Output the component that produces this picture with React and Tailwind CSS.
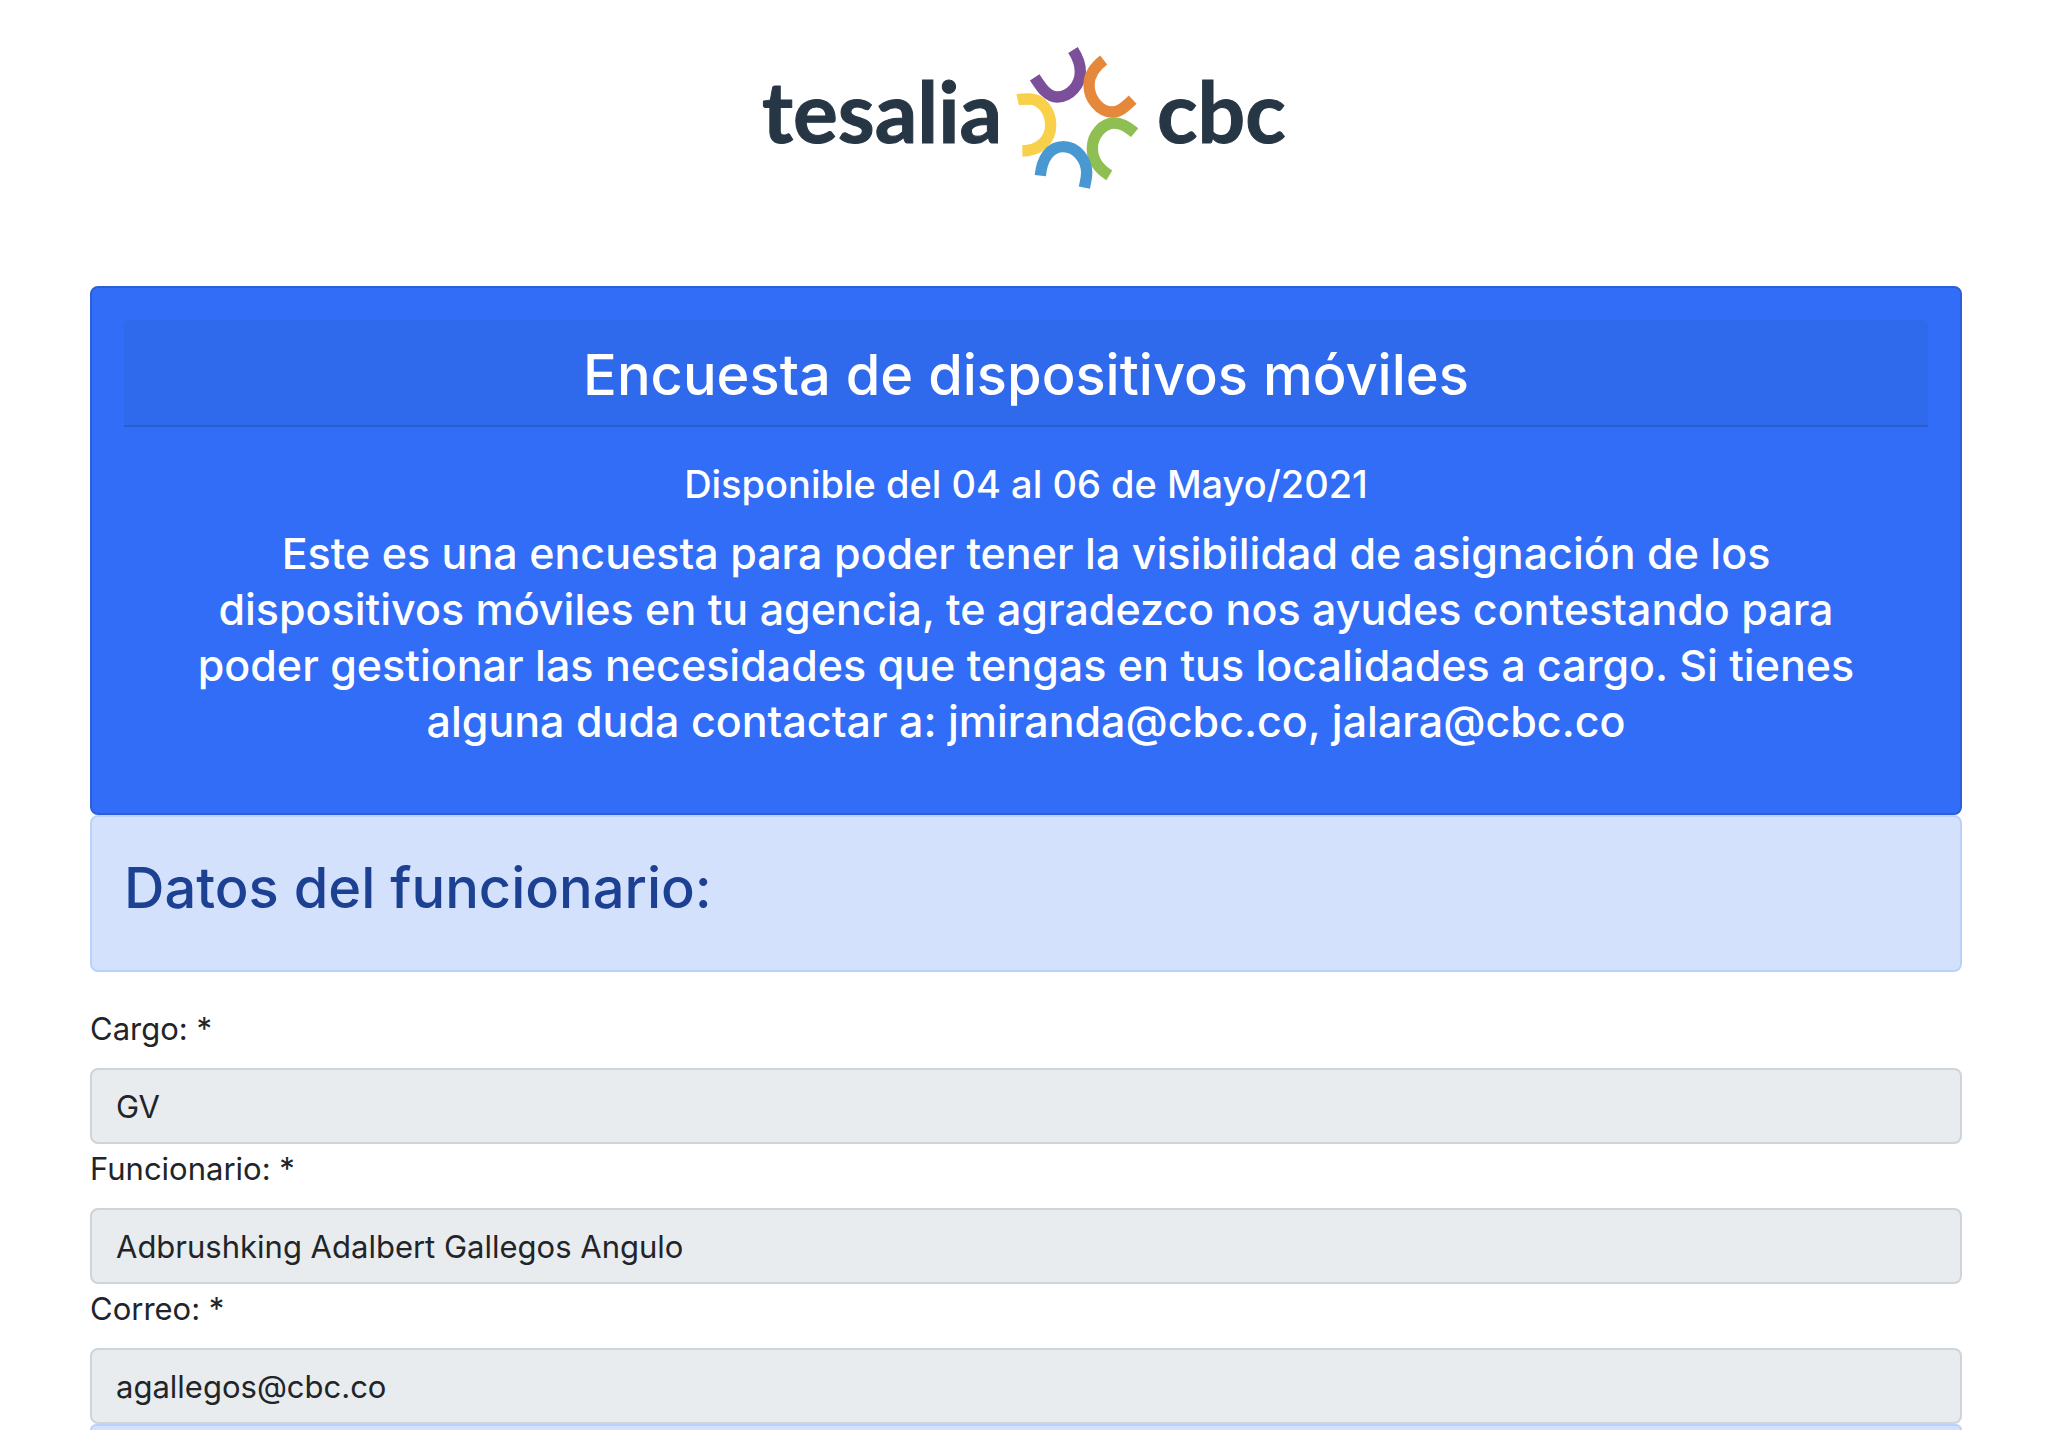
function Logo() {
  return (
    <svg viewBox="0 0 570 180" className="h-[180px] w-[570px]" role="img" aria-label="tesalia cbc">
      <g fill="#273645" stroke="#273645" strokeWidth="1" fontFamily="Lato, sans-serif" fontWeight="700" fontSize="84">
        <text x="21" y="113">tesalia</text>
        <text x="416" y="113">cbc</text>
      </g>
      <g transform="translate(259 0) scale(0.33333)" fill="none" strokeWidth="34">
        <path stroke="#f8d04a" d="M53 209C62 207 75 207 88 207C125 207 152 245 152 285C152 330 118 362 67 363" />
        <path stroke="#7b4f9a" d="M219 60C232 80 241 100 241 125C241 165 210 201 172 201C142 201 124 173 104 142" />
        <path stroke="#e5883b" d="M311 90C285 110 267 135 267 165C267 205 298 246 337 246C360 246 378 228 398 209" />
        <path stroke="#8fbe53" d="M404 308C385 292 367 279 344 279C308 279 277 315 277 355C277 395 298 418 328 436" />
        <path stroke="#4a98d2" d="M121 437C126 385 150 350 190 350C230 350 260 390 260 428C260 445 256 458 253 473" />
      </g>
    </svg>
  );
}

const fields = [
  { id: "cargo", label: "Cargo: *", value: "GV" },
  { id: "funcionario", label: "Funcionario: *", value: "Adbrushking Adalbert Gallegos Angulo" },
  { id: "correo", label: "Correo: *", value: "agallegos@cbc.co" },
];

function Field({ id, label, value }) {
  return (
    <div className="flex flex-col">
      <label htmlFor={id} className="mb-3.5 self-start text-[31px] leading-[50px]">{label}</label>
      <input
        id={id}
        type="text"
        readOnly
        defaultValue={value}
        className="h-[76px] w-full rounded-lg border-2 border-[#ced4da] bg-[#e9ecef] px-6 text-[31px] outline-none"
      />
    </div>
  );
}

export default function App() {
  return (
    <main className="bg-white pt-[30px] pr-[86px] pl-[90px] font-['Inter',sans-serif] text-[#212529]">
      <header className="mb-[76px] flex justify-center">
        <Logo />
      </header>
      <section className="rounded-lg border-2 border-[#2b5fd9] bg-[#316df6] px-8 pt-8 pb-16 text-center font-medium text-white">
        <h1 className="rounded-t-md border-b-2 border-[#2b5dcc] bg-[#2f6aec] pt-5 pb-3.5 text-[56px] leading-[71px]">
          Encuesta de dispositivos móviles
        </h1>
        <div className="px-12 pt-8">
          <p className="mb-4 text-[38px] leading-[50px]">Disponible del 04 al 06 de Mayo/2021</p>
          <p className="text-[43px] leading-[56px]">
            Este es una encuesta para poder tener la visibilidad de asignación de los dispositivos móviles en tu
            agencia, te agradezco nos ayudes contestando para poder gestionar las necesidades que tengas en tus
            localidades a cargo. Si tienes alguna duda contactar a: jmiranda@cbc.co, jalara@cbc.co
          </p>
        </div>
      </section>
      <section className="mb-8 rounded-lg border-2 border-[#bad2fb] bg-[#d4e1fc] px-8 pt-9 pb-[46px] text-[#1c4193]">
        <h2 className="text-[56px] leading-[71px] font-medium">Datos del funcionario:</h2>
      </section>
      <form>
        {fields.map((field) => (
          <Field key={field.id} {...field} />
        ))}
      </form>
      <div className="h-1.5 rounded-t-lg border-2 border-b-0 border-[#bad2fb] bg-[#d4e1fc]" />
    </main>
  );
}
